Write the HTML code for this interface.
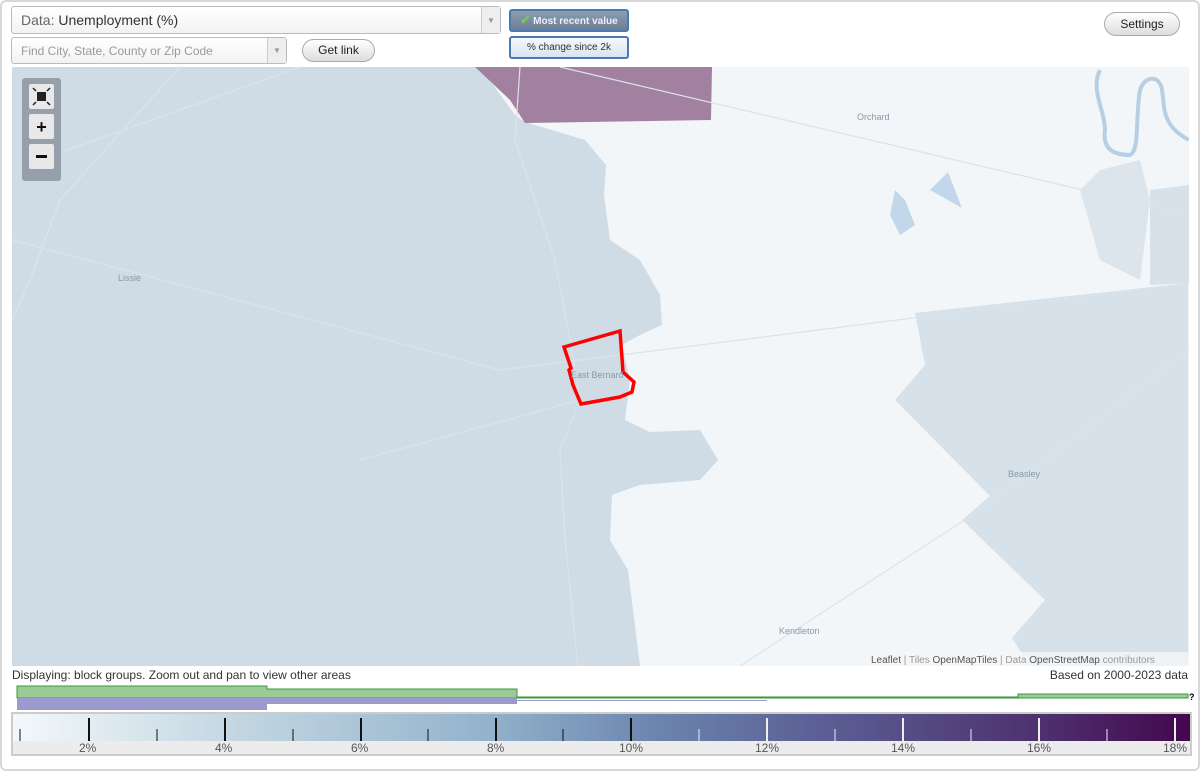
<!DOCTYPE html>
<html><head><style>
body{margin:0;width:1200px;height:771px;background:#fff;font-family:"Liberation Sans",sans-serif;position:relative;overflow:hidden}
.frame{position:absolute;left:0;top:0;width:1196px;height:767px;border:2px solid #d8d8d8;border-radius:6px}
.sel{position:absolute;border:1px solid #bbb;border-radius:3px;background:linear-gradient(#fff,#f2f2f2);box-sizing:border-box}
.arr{position:absolute;right:0;top:0;bottom:0;width:18px;border-left:1px solid #ccc;background:#eee;color:#999;font-size:8px;text-align:center}
.btn{position:absolute;border:1px solid #aaa;border-radius:12px;background:linear-gradient(#fff,#ddd);font-size:12px;text-align:center;color:#222;box-sizing:border-box}
.tb{position:absolute;border:2px solid #4a7bb0;border-radius:3px;font-size:10px;text-align:center;box-sizing:border-box}
.lab{position:absolute;font-size:12px;color:#555;top:741px}
</style></head><body>
<div class="frame"></div>
<div class="sel" style="left:11px;top:6px;width:490px;height:28px;font-size:14px;line-height:27px;padding-left:9px;color:#333"><span style="color:#666">Data:</span> Unemployment (%)<div class="arr" style="line-height:27px">▼</div></div>
<div class="sel" style="left:11px;top:37px;width:276px;height:27px;font-size:12px;line-height:26px;padding-left:9px;color:#999">Find City, State, County or Zip Code<div class="arr" style="line-height:26px">▼</div></div>
<div class="btn" style="left:302px;top:39px;width:73px;height:23px;line-height:21px">Get link</div>
<div class="tb" style="left:509px;top:9px;width:120px;height:23px;line-height:19px;background:linear-gradient(#8b9bb0,#6d7f96);color:#eef;font-weight:bold;font-size:10px"><span style="color:#7c4;font-size:12px">✔</span> Most recent value</div>
<div class="tb" style="left:509px;top:36px;width:120px;height:23px;line-height:19px;background:linear-gradient(#f4f8fc,#d8e4f0);color:#333">% change since 2k</div>
<div class="btn" style="left:1104px;top:12px;width:76px;height:24px;line-height:22px">Settings</div>

<svg style="position:absolute;left:12px;top:67px" width="1177" height="599" viewBox="12 67 1177 599">
<rect x="12" y="67" width="1177" height="599" fill="#f3f6f8"/>
<path d="M12 67H480L515 115L525 122L585 140L606 165L604 195L610 240L640 260L660 295L662 325L640 335L622 345L630 380L625 420L650 432L700 430L718 460L700 480L640 485L612 495L610 540L628 570L640 666H12Z" fill="#cfdce6"/>
<path d="M475 67H712L711 120L525 123L510 100Z" fill="#a1819f"/>
<path d="M915 313L1188 283V666H1030L1012 638L1045 600L962 520L990 496L895 400L925 365Z" fill="#d6e1e9"/>
<path d="M1150 190L1189 185V283L1150 285Z" fill="#d6e1e9"/>
<path d="M1080 190L1100 170L1140 160L1150 200L1140 280L1100 260Z" fill="#d6e1e9" opacity=".8"/>
<path d="M1100 70C1090 90 1105 110 1105 130C1102 150 1115 155 1130 155C1140 150 1135 120 1140 90C1145 75 1160 75 1162 90C1165 105 1160 125 1189 140" fill="none" stroke="#b6cfe4" stroke-width="4"/>
<path d="M930 190L948 172L962 208Z" fill="#c3d7ea"/>
<path d="M895 190L905 200L915 225L900 235L890 215Z" fill="#c3d7ea"/>
<g fill="none" stroke="#dbe3ea" stroke-width="1.2">
<path d="M12 240L500 370L700 345L1189 283"/>
<path d="M520 67L515 140L555 260L570 340L580 400L560 450L565 540L578 666"/>
<path d="M740 666L980 510L1189 350"/>
<path d="M560 67L1189 215"/>
<path d="M12 320L30 280L60 200L180 67"/>
<path d="M360 460L580 400"/>
<path d="M40 160L300 67"/>
</g>
<path d="M564 347L620 331L623 372L634 382L632 392L620 397L581 404L573 385L569 370L571 368Z" fill="none" stroke="#f00" stroke-width="3.5"/>
<g font-family="Liberation Sans" font-size="9" fill="#8a99a8">
<text x="118" y="281">Lissie</text><text x="857" y="120">Orchard</text><text x="571" y="378">East Bernard</text><text x="1008" y="477">Beasley</text><text x="779" y="634">Kendleton</text></g>
<rect x="22" y="78" width="39" height="103" rx="3" fill="#95a0ab"/>
<rect x="29" y="84" width="25" height="25" rx="2" fill="#e8e8e8"/>
<rect x="29" y="114" width="25" height="25" rx="2" fill="#e8e8e8"/>
<rect x="29" y="144" width="25" height="25" rx="2" fill="#e8e8e8"/>
<rect x="37" y="92" width="9" height="9" fill="#222"/>
<path d="M33 88l3 3M50 88l-3 3M33 105l3-3M50 105l-3-3" stroke="#222" stroke-width="1.5"/>
<text x="41.5" y="133" font-size="18" font-weight="bold" text-anchor="middle" fill="#111" font-family="Liberation Sans">+</text>
<rect x="36" y="155" width="11" height="3" fill="#111"/>
<rect x="866" y="652" width="323" height="14" fill="#f3f6f8" opacity=".85"/>
<text x="871" y="663" font-size="10" fill="#999" font-family="Liberation Sans"><tspan fill="#555">Leaflet</tspan> | Tiles <tspan fill="#555">OpenMapTiles</tspan> | Data <tspan fill="#555">OpenStreetMap</tspan> contributors</text>
</svg>

<div style="position:absolute;left:12px;top:668px;font-size:12px;color:#333">Displaying: block groups. Zoom out and pan to view other areas</div>
<div style="position:absolute;right:12px;top:668px;font-size:12px;color:#333">Based on 2000-2023 data</div>

<svg style="position:absolute;left:0;top:680px" width="1200" height="34">
<path d="M17 6H267V9H517V17H1018V14H1188V18H17Z" fill="#99cc95" stroke="#3a9a3a" stroke-width="1"/>
<path d="M17 18H517V20H767V21H17Z" fill="#9a9acc"/>
<rect x="17" y="18" width="250" height="12" fill="#9a9acc"/>
<rect x="267" y="18" width="250" height="6" fill="#9a9acc"/>
<text x="1189" y="20" font-size="9" font-weight="bold" font-family="Liberation Sans">?</text>
</svg>

<div style="position:absolute;left:11px;top:712px;width:1177px;height:40px;border:2px solid #ccc;background:#ececec"></div>
<div style="position:absolute;left:13px;top:714px;width:1177px;height:27px;background:linear-gradient(90deg,#f3f8fb,#c5d8e3 18%,#94b3cc 40%,#6b84ad 55%,#5a5b92 70%,#4d2f6d 88%,#44064d)"></div>
<svg style="position:absolute;left:0;top:714px" width="1200" height="27">
<g stroke="#111" stroke-width="2"><path d="M89 4V27M225 4V27M361 4V27M496 4V27M631 4V27"/></g>
<g stroke="#111" stroke-width="1"><path d="M20 15V27M157 15V27M293 15V27M428 15V27M563 15V27"/></g>
<g stroke="#eee" stroke-width="2"><path d="M767 4V27M903 4V27M1039 4V27M1175 4V27"/></g>
<g stroke="#eee" stroke-width="1"><path d="M699 15V27M835 15V27M971 15V27M1107 15V27"/></g>
</svg>
<div class="lab" style="left:79px">2%</div><div class="lab" style="left:215px">4%</div><div class="lab" style="left:351px">6%</div><div class="lab" style="left:487px">8%</div><div class="lab" style="left:619px">10%</div><div class="lab" style="left:755px">12%</div><div class="lab" style="left:891px">14%</div><div class="lab" style="left:1027px">16%</div><div class="lab" style="left:1163px">18%</div>
</body></html>
